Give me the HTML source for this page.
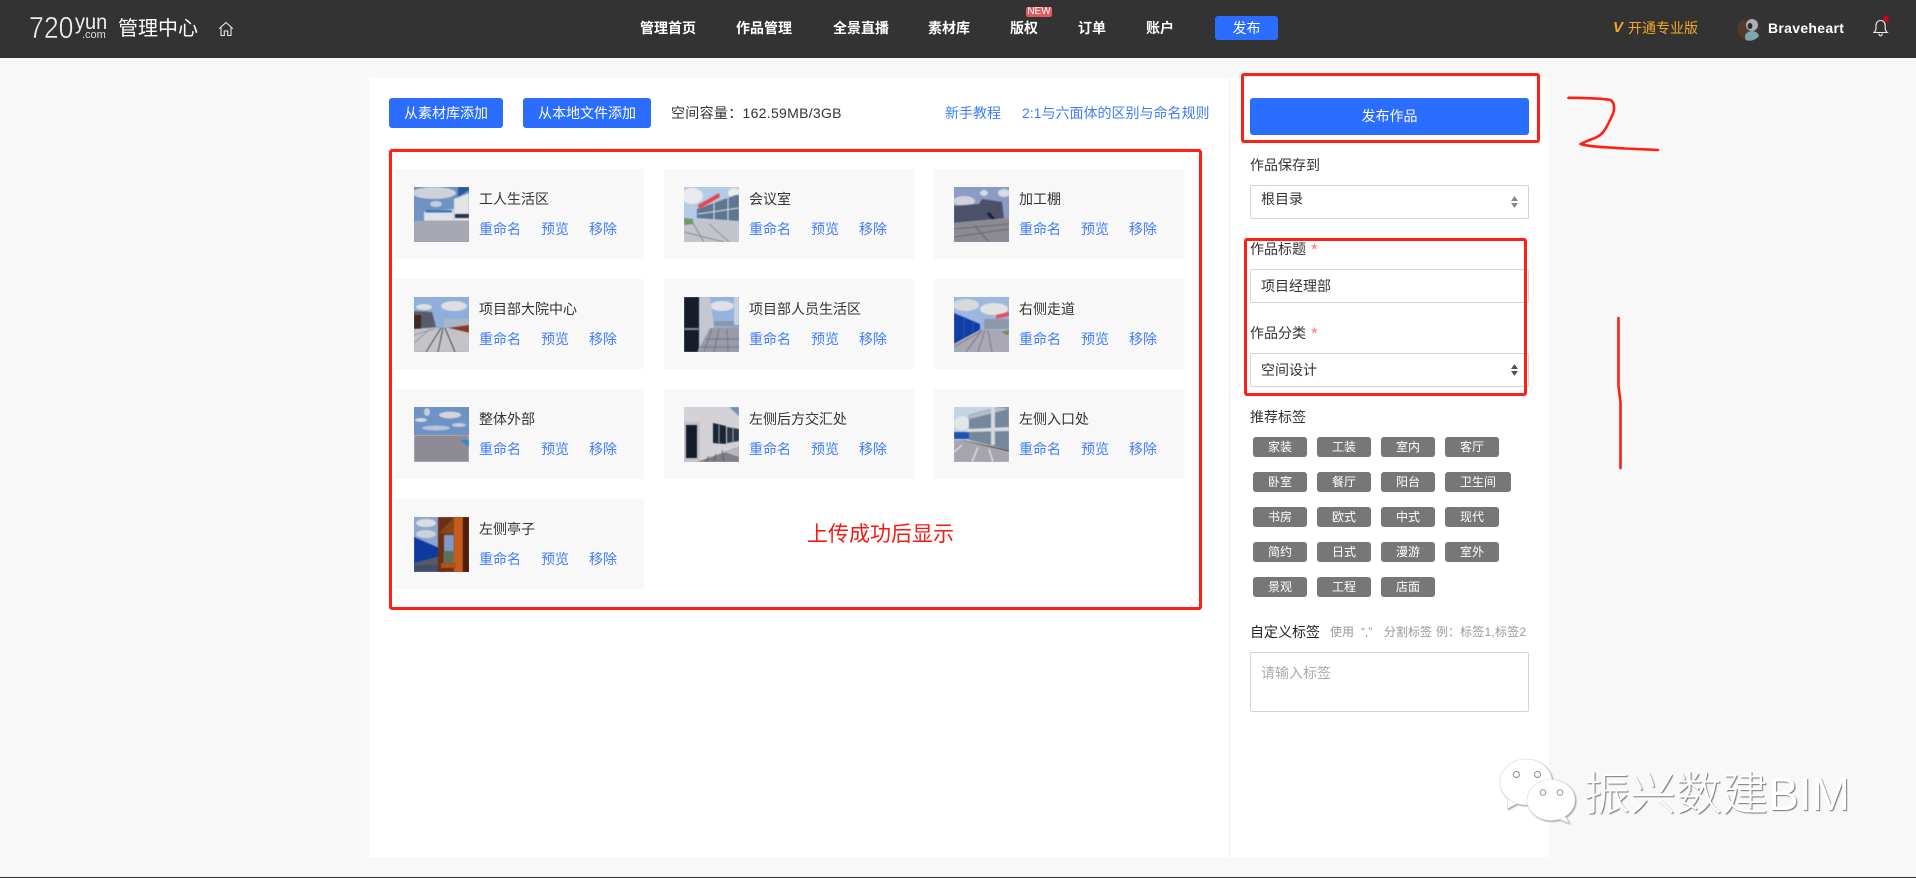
<!DOCTYPE html>
<html lang="zh"><head><meta charset="utf-8"><title>管理中心</title>
<style>
*{box-sizing:border-box}
html,body{margin:0;padding:0;width:1916px;height:878px;overflow:hidden;background:#f8f8f8}
body{position:relative;font:14px/20px "Liberation Sans","Noto Sans CJK SC",sans-serif;color:#333}
.a{position:absolute}
.t{position:absolute;white-space:nowrap;line-height:20px}
.n{position:absolute;top:18px;color:#fff;font-weight:700;white-space:nowrap;line-height:20px}
.btn{position:absolute;background:#2b6eff;color:#fff;border-radius:3px;text-align:center}
.card{position:absolute;width:250px;height:90px;background:#f8f8f8}
.card svg{position:absolute;left:20px;top:18px;width:55px;height:55px}
.card svg>:not(:first-child){filter:blur(.5px)}
.card .h{position:absolute;left:85px;top:20px;white-space:nowrap;color:#333}
.card i{position:absolute;top:50px;font-style:normal;color:#3f7bff;white-space:nowrap}
.tag{position:absolute;height:20px;width:54px;background:#777;color:#fff;border-radius:3px;font-size:12px;line-height:20px;text-align:center}
.field{position:absolute;left:1250px;width:279px;background:#fff;border:1px solid #d5d5d5;border-radius:2px}
.arr{position:absolute;left:1511px;width:7px;height:12px}
.rb{position:absolute;border:3px solid #fe2014;border-radius:3px}
.hint{position:absolute;top:622px;font-size:12px;color:#999;white-space:nowrap;line-height:20px}
</style></head><body>

<div class="a" style="left:0;top:0;width:1916px;height:58px;background:#333"></div>
<div class="t" style="left:29px;top:11px;font-size:31px;line-height:34px;color:#eee;transform:scaleX(.86);transform-origin:0 0;-webkit-text-stroke:.5px #333">720</div>
<div class="t" style="left:75px;top:12px;font-size:21px;line-height:22px;color:#eee;transform:scaleX(.95);transform-origin:0 0">yun</div>
<div class="t" style="left:82px;top:29px;font-size:11px;line-height:12px;color:#ddd">.com</div>
<div class="t" style="left:118px;top:16px;font-size:20px;line-height:26px;color:#fff">管理中心</div>
<svg class="a" style="left:218px;top:21px" width="16" height="16" viewBox="0 0 16 16" fill="none" stroke="#e8e8e8" stroke-width="1.1"><path d="M1.2 7.6 8 1.5l6.8 6.1M3 6.5V14.5H6.3V10h3.4v4.5H13V6.5"/></svg>

<div class="n" style="left:640px">管理首页</div>
<div class="n" style="left:736px">作品管理</div>
<div class="n" style="left:833px">全景直播</div>
<div class="n" style="left:928px">素材库</div>
<div class="n" style="left:1010px">版权</div>
<div class="a" style="left:1026px;top:7px;width:26px;height:10px;background:#e2585f;border-radius:2px;color:#fff;font-size:10px;line-height:10px;text-align:center">NEW</div>
<div class="n" style="left:1078px">订单</div>
<div class="n" style="left:1146px">账户</div>
<div class="btn" style="left:1215px;top:16px;width:63px;height:24px;line-height:24px">发布</div>

<div class="t" style="left:1613px;top:18px;color:#f5a623;font-weight:700;font-style:italic;font-size:15px">V</div>
<div class="t" style="left:1628px;top:18px;color:#f5a623">开通专业版</div>
<svg class="a" style="left:1737px;top:16px" width="25" height="25" viewBox="0 0 25 25"><defs><clipPath id="av"><circle cx="12.5" cy="12.5" r="12.2"/></clipPath></defs><g clip-path="url(#av)"><rect width="25" height="25" fill="#3b3431"/><ellipse cx="6" cy="14" rx="6" ry="10" fill="#54392f"/><ellipse cx="15" cy="9" rx="6" ry="6" fill="#a9b0b3"/><ellipse cx="15" cy="21" rx="7" ry="6" fill="#7fa6ad"/><ellipse cx="13" cy="10" rx="2.4" ry="3" fill="#2c2a2c"/></g></svg>
<div class="t" style="left:1768px;top:18px;color:#fff;font-weight:700;letter-spacing:.3px">Braveheart</div>
<svg class="a" style="left:1873px;top:19px" width="16" height="18" viewBox="0 0 16 18" fill="none" stroke="#eee" stroke-width="1.1"><path d="M1 13.5c1.6-1.2 2-2.5 2-4.5V6.5C3 3.6 5 1.5 7.6 1.5s4.6 2.1 4.6 5V9c0 2 .5 3.300 2 4.500zM5.800 14.500c.3 1.500 1 2.300 1.800 2.300s1.500-.8 1.800-2.300"/></svg>
<div class="a" style="left:1883px;top:16px;width:6px;height:6px;border-radius:50%;background:#d0021b"></div>

<div class="a" style="left:369px;top:78px;width:1180px;height:779px;background:#fff"></div>
<div class="a" style="left:1229px;top:78px;width:1px;height:779px;background:#eee"></div>

<div class="btn" style="left:389px;top:98px;width:114px;height:30px;line-height:30px">从素材库添加</div>
<div class="btn" style="left:523px;top:98px;width:128px;height:30px;line-height:30px">从本地文件添加</div>
<div class="t" style="left:671px;top:103px;letter-spacing:.3px">空间容量：162.59MB/3GB</div>
<div class="t" style="left:945px;top:103px;color:#3f7bff">新手教程</div>
<div class="t" style="left:1022px;top:103px;color:#3f7bff">2:1与六面体的区别与命名规则</div>
<div class="a" style="left:389px;top:148px;width:820px;height:1px;background:#eee"></div>

<div class="card" style="left:394px;top:169px"><svg viewBox="0 0 55 55"><rect width="55" height="55" fill="#6f93c4"/><ellipse cx="20" cy="6" rx="22" ry="6" fill="#cfd1d8"/><ellipse cx="22" cy="17" rx="6" ry="3" fill="#c4cede"/><polygon points="44,10 55,3 55,0 44,0" fill="#2a5a9e"/><polygon points="40,12 55,6 55,34 40,34" fill="#e3e3e8"/><rect x="41" y="27" width="14" height="4" fill="#2b3442"/><polygon points="10,25 40,22 40,34 10,34" fill="#dfe1e8"/><rect x="12" y="23" width="26" height="2.500" fill="#3f75ad"/><rect y="34" width="55" height="21" fill="#a8a8b2"/></svg><div class="h">工人生活区</div><i style="left:85px">重命名</i><i style="left:147px">预览</i><i style="left:195px">移除</i></div>
<div class="card" style="left:664px;top:169px"><svg viewBox="0 0 55 55"><rect width="55" height="55" fill="#b4cbe8"/><ellipse cx="8" cy="9" rx="11" ry="8" fill="#e8eaee"/><ellipse cx="50" cy="6" rx="6" ry="5" fill="#e8eaee"/><polygon points="13,22 52,8 55,8 55,34 13,31" fill="#5f7690"/><polygon points="14,18 35,6 36,10 15,22" fill="#e8444c"/><path d="M30 15v18M44 10v24M14 27l41-6" stroke="#dfe3e8" stroke-width="1"/><polygon points="0,33 10,32 55,35 55,55 0,55" fill="#c4c4cc"/><polygon points="0,31 9,32 9,37 0,38" fill="#6f9a60"/><path d="M9 36 20 55M0 45l40 10M25 37l20 18" stroke="#7f7f88" stroke-width=".8"/></svg><div class="h">会议室</div><i style="left:85px">重命名</i><i style="left:147px">预览</i><i style="left:195px">移除</i></div>
<div class="card" style="left:934px;top:169px"><svg viewBox="0 0 55 55"><rect width="55" height="55" fill="#8b9cc2"/><ellipse cx="10" cy="14" rx="11" ry="5" fill="#cfd2da"/><ellipse cx="30" cy="6" rx="4" ry="3" fill="#d8dbe2"/><ellipse cx="50" cy="6" rx="6" ry="4" fill="#d8dbe2"/><polygon points="0,19 25,17 28,12 48,15 50,32 0,36" fill="#4c5069"/><path d="M34 26l7 8" stroke="#1e1f2a" stroke-width="3"/><polygon points="0,36 50,31 55,32 55,55 0,55" fill="#8c8a92"/><path d="M0 42l55-5M0 50l55-8M20 38l15 17" stroke="#5f5e68" stroke-width=".8"/></svg><div class="h">加工棚</div><i style="left:85px">重命名</i><i style="left:147px">预览</i><i style="left:195px">移除</i></div>

<div class="card" style="left:394px;top:279px"><svg viewBox="0 0 55 55"><rect width="55" height="55" fill="#8faedb"/><ellipse cx="40" cy="9" rx="13" ry="5" fill="#dfdfe3"/><ellipse cx="10" cy="10" rx="8" ry="3" fill="#dfdfe3"/><polygon points="0,14 18,15 22,30 0,32" fill="#595b66"/><rect y="18" width="7" height="14" fill="#3d2a26"/><rect x="30" y="22" width="25" height="8" fill="#a9b8c8"/><polygon points="34,31 55,28 55,36" fill="#8e3a2a"/><polygon points="0,32 34,31 55,36 55,55 0,55" fill="#c3c3c8"/><path d="M27 31 12 55M29 31 24 55M31 31 41 55" stroke="#4d4d54" stroke-width="1"/><path d="M0 38l20-6M0 46l16-14" stroke="#8d8d95" stroke-width=".7"/></svg><div class="h">项目部大院中心</div><i style="left:85px">重命名</i><i style="left:147px">预览</i><i style="left:195px">移除</i></div>
<div class="card" style="left:664px;top:279px"><svg viewBox="0 0 55 55"><rect width="55" height="55" fill="#93b4e0"/><ellipse cx="38" cy="9" rx="12" ry="5" fill="#e0e0e4"/><polygon points="15,0 26,0 30,30 26,40 15,55" fill="#c6c7d0"/><rect width="15" height="55" fill="#161c2a"/><rect y="31" width="15" height="2" fill="#8a8c92"/><rect x="30" y="24" width="25" height="5" fill="#8c96a6"/><rect x="50" y="0" width="5" height="28" fill="#c8d2de"/><polygon points="26,31 55,30 55,55 13,55" fill="#9a9aa8"/><path d="M28 32 20 55M35 32l-5 23M43 32l1 23M22 42h33M17 50h38" stroke="#6b6b78" stroke-width=".7"/></svg><div class="h">项目部人员生活区</div><i style="left:85px">重命名</i><i style="left:147px">预览</i><i style="left:195px">移除</i></div>
<div class="card" style="left:934px;top:279px"><svg viewBox="0 0 55 55"><rect width="55" height="55" fill="#9db8de"/><ellipse cx="12" cy="8" rx="13" ry="6" fill="#d8d9df"/><ellipse cx="40" cy="12" rx="14" ry="6" fill="#e2e1e3"/><polygon points="0,16 26,27 26,33 0,47" fill="#0f3ea6"/><path d="M10 20v22M19 24v12" stroke="#3a62b8" stroke-width=".8"/><rect x="30" y="22" width="25" height="10" fill="#8a98a8"/><polygon points="42,18 55,15 55,19 42,22" fill="#e8505a"/><polygon points="45,35 55,33 55,38 48,38" fill="#7a8a55"/><polygon points="26,33 45,33 55,40 55,55 0,55 0,47" fill="#aaa8b4"/><path d="M28 33 12 55M31 33 24 55M34 33l4 22M0 50l28-16" stroke="#6b6b78" stroke-width=".7"/></svg><div class="h">右侧走道</div><i style="left:85px">重命名</i><i style="left:147px">预览</i><i style="left:195px">移除</i></div>

<div class="card" style="left:394px;top:389px"><svg viewBox="0 0 55 55"><rect width="55" height="28" fill="#6d92c6"/><ellipse cx="13" cy="5" rx="3" ry="4" fill="#c8cdd6"/><ellipse cx="36" cy="8" rx="11" ry="3.500" fill="#d2d5da"/><ellipse cx="7" cy="13" rx="6" ry="2" fill="#d4d6dc"/><ellipse cx="22" cy="21" rx="14" ry="2.500" fill="#b9c4d8"/><ellipse cx="45" cy="18" rx="7" ry="2" fill="#c6ccd8"/><rect y="28" width="55" height="27" fill="#8f8b94"/><polygon points="46,33 55,33 55,40" fill="#2f86d8"/></svg><div class="h">整体外部</div><i style="left:85px">重命名</i><i style="left:147px">预览</i><i style="left:195px">移除</i></div>
<div class="card" style="left:664px;top:389px"><svg viewBox="0 0 55 55"><rect width="55" height="55" fill="#d4d2d7"/><polygon points="45,0 55,0 55,9" fill="#6f8fc0"/><rect x="0" y="15" width="16" height="40" fill="#c2c1c8"/><rect x="2" y="18" width="11" height="33" fill="#141b28"/><polygon points="29,16 42,19 42,37 29,36" fill="#1a2433"/><polygon points="43,20 55,22 55,34 43,36" fill="#2a3648"/><path d="M35 18v18M49 21v14" stroke="#c6c7cc" stroke-width=".8"/><polygon points="13,55 55,40 55,55" fill="#7f7e86"/><polygon points="40,45 55,40 55,50" fill="#b8b7bd"/><path d="M22 55l3-6M30 55l2-8M40 55l-2-12" stroke="#4f4e56" stroke-width=".7"/></svg><div class="h">左侧后方交汇处</div><i style="left:85px">重命名</i><i style="left:147px">预览</i><i style="left:195px">移除</i></div>
<div class="card" style="left:934px;top:389px"><svg viewBox="0 0 55 55"><rect width="55" height="55" fill="#c4d3e6"/><ellipse cx="8" cy="16" rx="8" ry="7" fill="#e4e5e8"/><rect y="25" width="18" height="7" fill="#1f50b5"/><polygon points="15,8 45,0 55,0 55,43 15,33" fill="#73889b"/><polygon points="15,8 45,0 55,2 16,12" fill="#b6bdc6"/><polygon points="13,22 55,20 55,24 13,25" fill="#d8dde2"/><rect x="37" y="0" width="4" height="38" fill="#d5d9de"/><polygon points="8,33 55,43 55,45 10,35" fill="#5e4a3a"/><polygon points="0,33 8,33 55,45 55,55 0,55" fill="#a6a4ac"/><path d="M8 38 0 45M24 40 18 55M35 42l4 13" stroke="#e5e5e9" stroke-width="1.300"/></svg><div class="h">左侧入口处</div><i style="left:85px">重命名</i><i style="left:147px">预览</i><i style="left:195px">移除</i></div>

<div class="card" style="left:394px;top:499px"><svg viewBox="0 0 55 55"><rect width="55" height="55" fill="#8ba6d0"/><ellipse cx="12" cy="6" rx="10" ry="4" fill="#dcdde3"/><ellipse cx="12" cy="17" rx="10" ry="4" fill="#cdd1da"/><polygon points="0,20 30,33 30,41 0,48" fill="#0e3aa0"/><polygon points="0,46 30,38 30,48 0,55" fill="#565a62"/><rect x="0" y="48" width="30" height="7" fill="#3f4d68"/><rect x="24" y="0" width="31" height="55" fill="#6d2e12"/><polygon points="25,16 40,0 48,0 48,18" fill="#8a4418"/><rect x="30" y="18" width="10" height="28" fill="#7f9ac8"/><rect x="30" y="34" width="10" height="12" fill="#5b6f5a"/><rect x="40" y="0" width="9" height="55" fill="#c75d1c"/><rect x="27" y="46" width="15" height="5" fill="#b25218"/><rect x="49" y="0" width="6" height="55" fill="#4d1e0c"/></svg><div class="h">左侧亭子</div><i style="left:85px">重命名</i><i style="left:147px">预览</i><i style="left:195px">移除</i></div>

<div class="t" style="left:807px;top:522px;font-size:21px;line-height:26px;color:#f61a12">上传成功后显示</div>
<div class="rb" style="left:389px;top:149px;width:813px;height:461px"></div>

<div class="btn" style="left:1250px;top:98px;width:279px;height:37px;line-height:37px">发布作品</div>
<div class="rb" style="left:1241px;top:73px;width:299px;height:70px"></div>

<div class="t" style="left:1250px;top:155px">作品保存到</div>
<div class="field" style="top:185px;height:34px"></div>
<div class="t" style="left:1261px;top:189px">根目录</div>
<svg class="arr" style="top:196px" viewBox="0 0 7 12"><path d="M3.500 0 7 5H0zM0 7h7l-3.500 5z" fill="#888"/></svg>

<div class="t" style="left:1250px;top:239px">作品标题</div>
<div class="t" style="left:1311px;top:240px;color:#f77;font-size:17px">*</div>
<div class="field" style="top:269px;height:34px"></div>
<div class="t" style="left:1261px;top:276px">项目经理部</div>
<div class="t" style="left:1250px;top:323px">作品分类</div>
<div class="t" style="left:1311px;top:324px;color:#f77;font-size:17px">*</div>
<div class="field" style="top:353px;height:34px"></div>
<div class="t" style="left:1261px;top:360px">空间设计</div>
<svg class="arr" style="top:364px" viewBox="0 0 7 12"><path d="M3.500 0 7 5H0zM0 7h7l-3.500 5z" fill="#555"/></svg>
<div class="rb" style="left:1244px;top:238px;width:283px;height:158px"></div>

<div class="t" style="left:1250px;top:407px">推荐标签</div>
<div class="tag" style="left:1253px;top:437px">家装</div><div class="tag" style="left:1317px;top:437px">工装</div><div class="tag" style="left:1381px;top:437px">室内</div><div class="tag" style="left:1445px;top:437px">客厅</div>
<div class="tag" style="left:1253px;top:472px">卧室</div><div class="tag" style="left:1317px;top:472px">餐厅</div><div class="tag" style="left:1381px;top:472px">阳台</div><div class="tag" style="left:1445px;top:472px;width:66px">卫生间</div>
<div class="tag" style="left:1253px;top:507px">书房</div><div class="tag" style="left:1317px;top:507px">欧式</div><div class="tag" style="left:1381px;top:507px">中式</div><div class="tag" style="left:1445px;top:507px">现代</div>
<div class="tag" style="left:1253px;top:542px">简约</div><div class="tag" style="left:1317px;top:542px">日式</div><div class="tag" style="left:1381px;top:542px">漫游</div><div class="tag" style="left:1445px;top:542px">室外</div>
<div class="tag" style="left:1253px;top:577px">景观</div><div class="tag" style="left:1317px;top:577px">工程</div><div class="tag" style="left:1381px;top:577px">店面</div>

<div class="t" style="left:1250px;top:622px;color:#222">自定义标签</div>
<div class="hint" style="left:1330px">使用</div>
<div class="hint" style="left:1361px">&ldquo;,&rdquo;</div>
<div class="hint" style="left:1384px">分割标签</div>
<div class="hint" style="left:1436px">例：</div>
<div class="hint" style="left:1460px;letter-spacing:.25px">标签1,标签2</div>
<div class="field" style="top:652px;height:60px"></div>
<div class="t" style="left:1261px;top:663px;color:#aaa">请输入标签</div>

<svg class="a" style="left:0;top:0;pointer-events:none" width="1916" height="878" fill="none" stroke="#fe2014" stroke-width="2.600" stroke-linecap="round" stroke-linejoin="round">
<path d="M1568.500 97.800C1585 98 1600 98 1610.500 100 1615 103 1615 110 1612 116 1609 122 1607 127 1604 131 1600 137 1592 139 1587 141L1580.500 144C1590 147 1605 147 1625 148.500L1658 150"/>
<path d="M1618.500 318V386L1620.500 402V468"/>
<g stroke="#d8d8d8" stroke-width=".6" fill="#fff" style="filter:drop-shadow(1px 1px .8px #999)">
<path d="M1508 795l-1 14 13-7z"/>
<ellipse cx="1526" cy="782" rx="26" ry="23"/>
<path d="M1564 814l5 9-13-5z"/>
<ellipse cx="1551" cy="800" rx="24" ry="20.500"/>
</g>
<g fill="#fff" stroke="#8a8a8a" stroke-width=".9"><circle cx="1516.500" cy="774.500" r="3"/><circle cx="1537.500" cy="774.500" r="3"/><circle cx="1543" cy="792.500" r="2.800"/><circle cx="1560" cy="792.500" r="2.800"/></g>
</svg>

<div class="t" style="left:1584px;top:766px;font-size:46px;line-height:56px;color:#fff;text-shadow:1px 1px 1px #777;font-weight:300">振兴数建BIM</div>

<div class="a" style="left:0;top:877px;width:1916px;height:1px;background:#333"></div>
</body></html>
